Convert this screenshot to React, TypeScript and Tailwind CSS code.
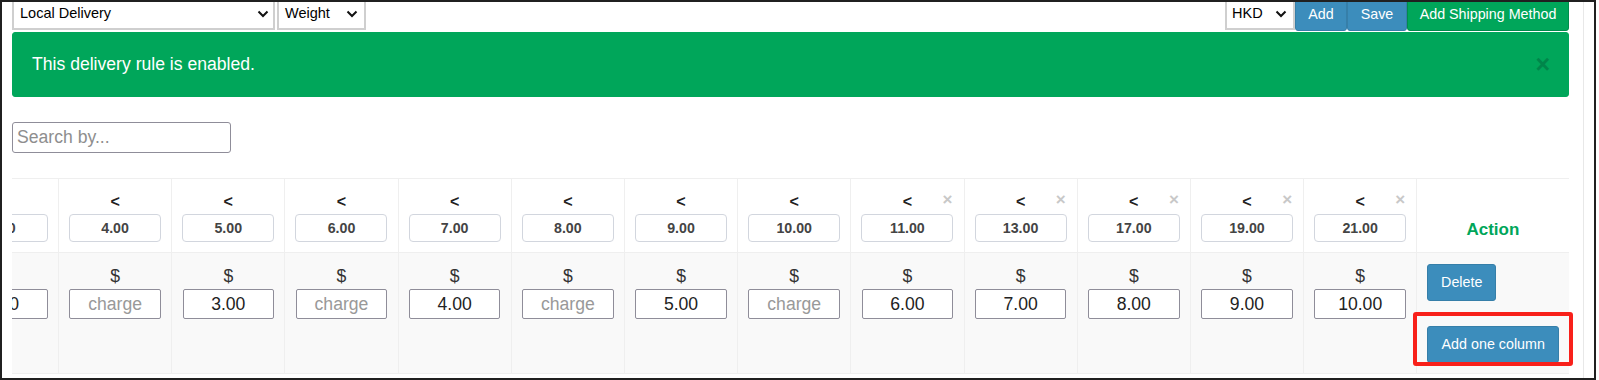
import React from "react";

const Chevron = () => (
  <svg width="12" height="8" viewBox="0 0 12 8" className="shrink-0">
    <polyline points="1.5,1.5 6,6 10.5,1.5" fill="none" stroke="#111" strokeWidth="2" />
  </svg>
);

const headerVals = ["3.00", "4.00", "5.00", "6.00", "7.00", "8.00", "9.00", "10.00", "11.00", "13.00", "17.00", "19.00", "21.00"];
const bodyVals = ["2.00", "", "3.00", "", "4.00", "", "5.00", "", "6.00", "7.00", "8.00", "9.00", "10.00"];

export default function App() {
  return (
    <div className="w-[1599px] h-[380px] bg-white font-['Liberation_Sans',Arial,sans-serif] overflow-hidden">
      <div className="w-[1596px] h-[380px] border-2 border-[#202020] overflow-hidden flex bg-white">
        <div className="relative w-[1582px] h-full shrink-0 border-r border-[#e8e8e8] pl-[10px] pr-[14px]">
          {/* top row */}
          <div className="flex items-start mt-[-4px] h-[33px]">
            <div className="w-[263px] h-[31.5px] border-2 border-[#cfcfcf] bg-white flex items-center justify-between pl-[6px] pr-[4px] text-[14.5px] text-black">
              <span>Local Delivery</span>
              <Chevron />
            </div>
            <div className="ml-[2px] w-[89px] h-[31.5px] border-2 border-[#cfcfcf] bg-white flex items-center justify-between pl-[6px] pr-[6px] text-[14.5px] text-black">
              <span>Weight</span>
              <Chevron />
            </div>
            <div className="flex-1" />
            <div className="w-[70px] h-[31.5px] border-2 border-[#cfcfcf] bg-white flex items-center justify-between pl-[5px] pr-[6px] text-[14.5px] text-black">
              <span>HKD</span>
              <Chevron />
            </div>
            <div className="w-[52px] h-[33px] bg-[#3c8dbc] border border-[#367fa9] rounded-[3px] text-white text-[14.3px] flex items-center justify-center">Add</div>
            <div className="w-[60px] h-[33px] bg-[#3c8dbc] border border-[#367fa9] rounded-[3px] text-white text-[14.3px] flex items-center justify-center">Save</div>
            <div className="w-[162px] h-[33px] bg-[#00a65a] border border-[#008d4c] rounded-[3px] text-white text-[14.3px] flex items-center justify-center">Add Shipping Method</div>
          </div>

          {/* alert */}
          <div className="mt-[1px] h-[65px] bg-[#00a65a] border border-[#00a65a] rounded-[3px] flex items-center justify-between pl-[19px] pr-[18px] text-white text-[17.6px]">
            <span>This delivery rule is enabled.</span>
            <span className="text-[25px] font-bold text-[#00854a] leading-none">×</span>
          </div>

          {/* search */}
          <input
            readOnly
            placeholder="Search by..."
            className="block mt-[25px] w-[219px] h-[31px] border border-[#8f8d99] rounded-[3px] pl-[4px] text-[17.6px] text-[#333] placeholder:text-[#8e8e8e] outline-none bg-white"
          />

          {/* table */}
          <div className="mt-[25px] w-[1557px] overflow-hidden">
            <div className="flex ml-[-66.2px]">
              {headerVals.map((hv, i) => (
                <div key={i} className="w-[113.2px] shrink-0 flex flex-col border-r border-[#efefef]">
                  <div className="relative h-[74px] border-t border-[#efefef] bg-white flex flex-col items-center justify-end pb-[10px]">
                    {i >= 8 && (
                      <span className="absolute right-[11px] top-[12px] text-[17px] font-bold leading-none text-[#c8c8c8]">×</span>
                    )}
                    <div className="h-[20px] leading-[20px] text-[16px] font-bold text-[#222]">&lt;</div>
                    <input
                      readOnly
                      value={hv}
                      className="mt-[2px] w-[92px] h-[28px] border border-[#d2d6de] rounded-[4px] text-center text-[14.2px] font-bold text-[#444] bg-white outline-none"
                    />
                  </div>
                  <div className="h-[122px] border-t border-b border-[#efefef] bg-[#f9f9f9] flex flex-col items-center pt-[11px]">
                    <div className="h-[25px] leading-[25px] text-[17.6px] text-[#333]">$</div>
                    <input
                      readOnly
                      value={bodyVals[i]}
                      placeholder="charge"
                      className="w-[91.5px] h-[30px] border border-[#8f8d99] rounded-[2px] text-center text-[17.6px] text-[#222] placeholder:text-[#999] bg-white outline-none"
                    />
                  </div>
                </div>
              ))}
              <div className="w-[151.3px] shrink-0 flex flex-col">
                <div className="h-[74px] border-t border-[#efefef] bg-white flex items-end justify-center pb-[10px]">
                  <span className="leading-[24px] text-[17px] font-bold text-[#00a65a]">Action</span>
                </div>
                <div className="h-[122px] border-t border-b border-[#efefef] bg-[#f9f9f9] flex flex-col items-start pl-[10px] pt-[11px]">
                  <div className="w-[69px] h-[37px] bg-[#3c8dbc] border border-[#367fa9] rounded-[3px] text-white text-[14.3px] flex items-center justify-center">Delete</div>
                  <div className="mt-[25px] w-[132px] h-[37px] bg-[#3c8dbc] border border-[#367fa9] rounded-[3px] text-white text-[14.3px] flex items-center justify-center">Add one column</div>
                </div>
              </div>
            </div>
          </div>

          {/* annotation */}
          <div className="absolute left-[1411px] top-[310px] w-[160px] h-[54px] border-4 border-[#f8201a] rounded-[3px] pointer-events-none" />
        </div>
      </div>
    </div>
  );
}
